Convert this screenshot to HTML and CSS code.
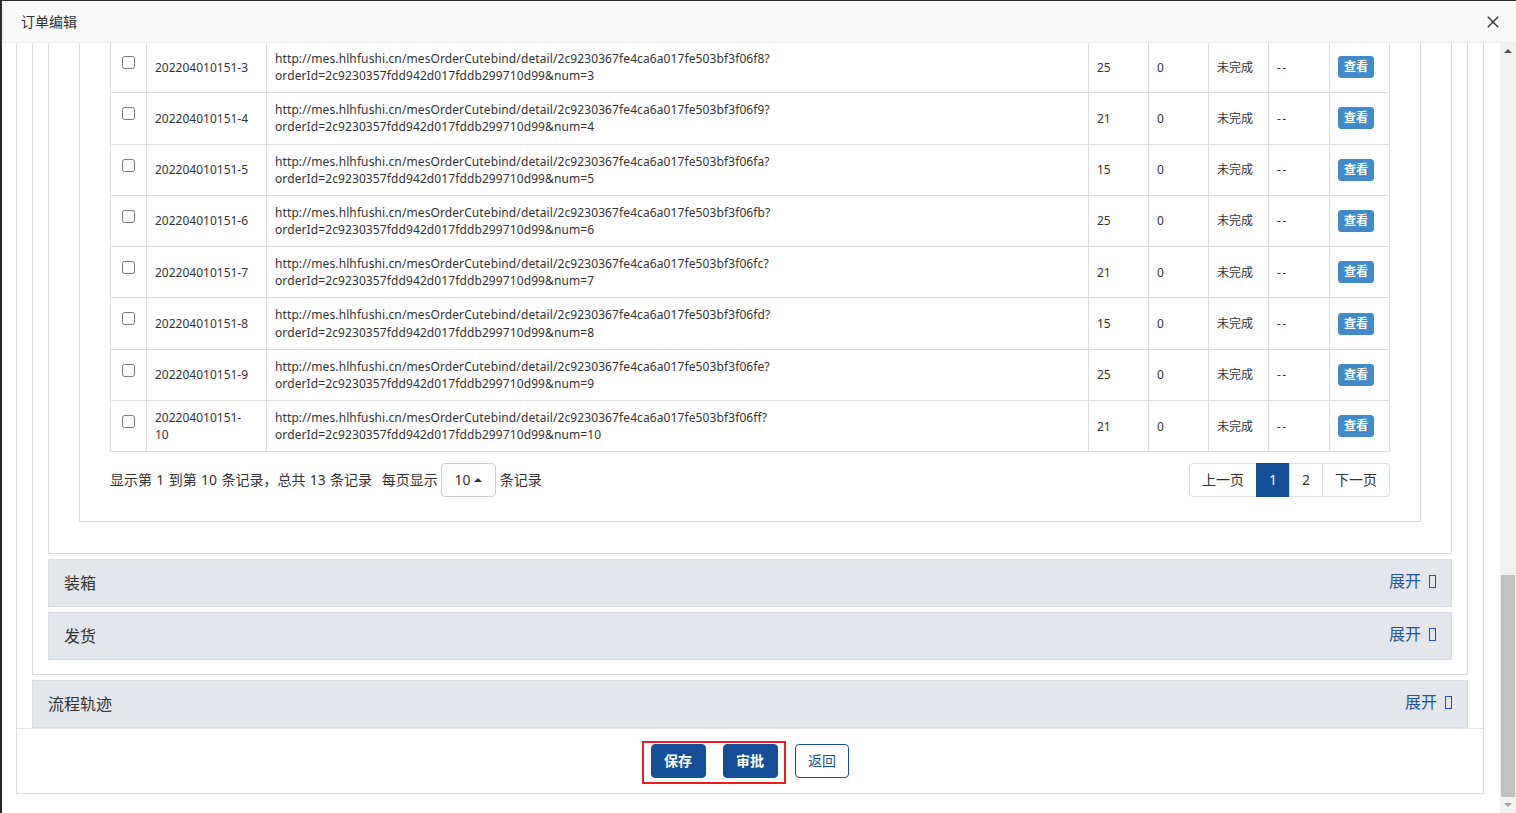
FILE: index.html
```html
<!DOCTYPE html>
<html lang="zh-CN">
<head>
    <meta charset="UTF-8">
    <meta name="viewport" content="width=device-width, initial-scale=1.0">
    <title>订单编辑</title>
    <link rel="stylesheet" href="styles.css">
</head>
<body>
<div class="layer">
    <div class="layer-title">
        <span class="layer-name">订单编辑</span>
        <svg class="layer-close" width="12" height="12" viewBox="0 0 12 12"><path d="M0.8 0.8L11.2 11.2M11.2 0.8L0.8 11.2" stroke="#333" stroke-width="1.4" fill="none"/></svg>
    </div>

    <div class="layer-body">
        <div class="layer-content">
            <div class="form-box">
                <div class="form-main">
                    <!-- 裁床/绑定 -->
                    <div class="section">
                        <div class="section-body">
                            <div class="table-box">
                                <table class="bind-table">
                                    <colgroup>
                                        <col style="width:36px"><col style="width:120px"><col style="width:822px">
                                        <col style="width:60px"><col style="width:60px"><col style="width:60px">
                                        <col style="width:61px"><col style="width:60px">
                                    </colgroup>
                                    <tr>
                                        <td class="check"><input type="checkbox"></td>
                                        <td>202204010151-3</td>
                                        <td class="url">http://mes.hlhfushi.cn/mesOrderCutebind/detail/2c9230367fe4ca6a017fe503bf3f06f8?<br>orderId=2c9230357fdd942d017fddb299710d99&amp;num=3</td>
                                        <td>25</td><td>0</td><td>未完成</td><td class="dash">--</td>
                                        <td><button class="btn-view">查看</button></td>
                                    </tr>
                                    <tr>
                                        <td class="check"><input type="checkbox"></td>
                                        <td>202204010151-4</td>
                                        <td class="url">http://mes.hlhfushi.cn/mesOrderCutebind/detail/2c9230367fe4ca6a017fe503bf3f06f9?<br>orderId=2c9230357fdd942d017fddb299710d99&amp;num=4</td>
                                        <td>21</td><td>0</td><td>未完成</td><td class="dash">--</td>
                                        <td><button class="btn-view">查看</button></td>
                                    </tr>
                                    <tr>
                                        <td class="check"><input type="checkbox"></td>
                                        <td>202204010151-5</td>
                                        <td class="url">http://mes.hlhfushi.cn/mesOrderCutebind/detail/2c9230367fe4ca6a017fe503bf3f06fa?<br>orderId=2c9230357fdd942d017fddb299710d99&amp;num=5</td>
                                        <td>15</td><td>0</td><td>未完成</td><td class="dash">--</td>
                                        <td><button class="btn-view">查看</button></td>
                                    </tr>
                                    <tr>
                                        <td class="check"><input type="checkbox"></td>
                                        <td>202204010151-6</td>
                                        <td class="url">http://mes.hlhfushi.cn/mesOrderCutebind/detail/2c9230367fe4ca6a017fe503bf3f06fb?<br>orderId=2c9230357fdd942d017fddb299710d99&amp;num=6</td>
                                        <td>25</td><td>0</td><td>未完成</td><td class="dash">--</td>
                                        <td><button class="btn-view">查看</button></td>
                                    </tr>
                                    <tr>
                                        <td class="check"><input type="checkbox"></td>
                                        <td>202204010151-7</td>
                                        <td class="url">http://mes.hlhfushi.cn/mesOrderCutebind/detail/2c9230367fe4ca6a017fe503bf3f06fc?<br>orderId=2c9230357fdd942d017fddb299710d99&amp;num=7</td>
                                        <td>21</td><td>0</td><td>未完成</td><td class="dash">--</td>
                                        <td><button class="btn-view">查看</button></td>
                                    </tr>
                                    <tr>
                                        <td class="check"><input type="checkbox"></td>
                                        <td>202204010151-8</td>
                                        <td class="url">http://mes.hlhfushi.cn/mesOrderCutebind/detail/2c9230367fe4ca6a017fe503bf3f06fd?<br>orderId=2c9230357fdd942d017fddb299710d99&amp;num=8</td>
                                        <td>15</td><td>0</td><td>未完成</td><td class="dash">--</td>
                                        <td><button class="btn-view">查看</button></td>
                                    </tr>
                                    <tr>
                                        <td class="check"><input type="checkbox"></td>
                                        <td>202204010151-9</td>
                                        <td class="url">http://mes.hlhfushi.cn/mesOrderCutebind/detail/2c9230367fe4ca6a017fe503bf3f06fe?<br>orderId=2c9230357fdd942d017fddb299710d99&amp;num=9</td>
                                        <td>25</td><td>0</td><td>未完成</td><td class="dash">--</td>
                                        <td><button class="btn-view">查看</button></td>
                                    </tr>
                                    <tr>
                                        <td class="check"><input type="checkbox"></td>
                                        <td>202204010151-<br>10</td>
                                        <td class="url">http://mes.hlhfushi.cn/mesOrderCutebind/detail/2c9230367fe4ca6a017fe503bf3f06ff?<br>orderId=2c9230357fdd942d017fddb299710d99&amp;num=10</td>
                                        <td>21</td><td>0</td><td>未完成</td><td class="dash">--</td>
                                        <td><button class="btn-view">查看</button></td>
                                    </tr>
                                </table>

                                <!-- 分页 -->
                                <div class="table-pagination">
                                    <div class="pagination-detail">
                                        <span class="pagination-info">显示第 1 到第 10 条记录，总共 13 条记录</span>
                                        <span>每页显示 <button class="page-size">10 <span class="caret"></span></button> 条记录</span>
                                    </div>
                                    <ul class="pagination">
                                        <li><a href="#">上一页</a></li>
                                        <li class="active"><a href="#">1</a></li>
                                        <li><a href="#">2</a></li>
                                        <li><a href="#">下一页</a></li>
                                    </ul>
                                </div>
                            </div>
                        </div>

                        <div class="panel-head">
                            <span>装箱</span>
                            <a class="toggle" href="#">展开<span class="icon-missing"></span></a>
                        </div>
                        <div class="panel-head">
                            <span>发货</span>
                            <a class="toggle" href="#">展开<span class="icon-missing"></span></a>
                        </div>
                    </div>

                    <div class="panel-head panel-flow">
                        <span>流程轨迹</span>
                        <a class="toggle" href="#">展开<span class="icon-missing"></span></a>
                    </div>
                </div>

                <!-- 底部按钮 -->
                <div class="form-footer">
                    <span class="mark">
                        <button class="btn btn-primary">保存</button>
                        <button class="btn btn-primary">审批</button>
                    </span>
                    <button class="btn btn-default">返回</button>
                </div>
            </div>
        </div>

        <div class="scrollbar">
            <div class="sb-arrow sb-up"></div>
            <div class="sb-track"><div class="sb-thumb"></div></div>
            <div class="sb-arrow sb-down"></div>
        </div>
    </div>
</div>
</body>
</html>
```

FILE: styles.css
```css
/* Umum */
body {
    margin: 0;
    background-color: #2b2b2b;
    font-family: "Noto Sans", "Noto Sans CJK SC", sans-serif;
    color: #333;
}

.layer {
    margin: 1px 0 0 2px;
    height: 812px;
    background-color: #fff;
    display: flex;
    flex-direction: column;
    overflow: hidden;
}

.layer-title {
    flex-shrink: 0;
    height: 41px;
    border-bottom: 1px solid #eee;
    background-color: #f8f8f8;
    padding: 0 17px 0 19px;
    font-size: 14px;
    display: flex;
    justify-content: space-between;
    align-items: center;
}
.layer-name { margin-top: -2px; }
.layer-close { margin-top: 1px; }

.layer-body {
    flex: 1;
    min-height: 0;
    display: flex;
}
.layer-content {
    flex: 1;
    overflow: hidden;
}

/* Kotak bertingkat */
.form-box {
    margin: -2px 16px 0 14px;
    border: 1px solid #ddd;
    border-top: 0;
}
.form-main { padding: 0 15px; }

.section {
    border: 1px solid #ddd;
    border-top: 0;
    padding: 0 15px 14px;
}
.section-body {
    border: 1px solid #ddd;
    border-top: 0;
    padding: 0 30px 31px;
    margin-bottom: 5px;
}
.table-box {
    border: 1px solid #ddd;
    border-top: 0;
    padding: 0 30px 24px;
}

/* Tabel */
.bind-table {
    width: 100%;
    table-layout: fixed;
    border-collapse: collapse;
    font-size: 12px;
    line-height: 1.42857;
}
.bind-table td {
    border: 1px solid #ddd;
    padding: 8px;
    vertical-align: middle;
    word-break: break-all;
}
.bind-table td.url { letter-spacing: 0.1px; }
.bind-table td.dash { letter-spacing: 1.5px; }
.bind-table td.check {
    vertical-align: top;
}
.bind-table td.check input {
    display: block;
    margin: 6px auto 0;
}
.btn-view {
    font-family: inherit;
    font-size: 12px;
    font-weight: bold;
    line-height: 1.5;
    padding: 1px 5px;
    color: #fff;
    background-color: #428bca;
    border: 1px solid #428bca;
    border-radius: 3px;
}

/* Paginasi */
.table-pagination {
    margin-top: 11px;
    display: flex;
    justify-content: space-between;
    align-items: center;
    font-size: 14px;
}
.pagination-info {
    margin-right: 6px;
    word-spacing: 0.7px;
}
.page-size {
    font-family: inherit;
    font-size: 14px;
    line-height: 20px;
    color: #333;
    padding: 6px 13px 6px 12px;
    background-color: #fff;
    border: 1px solid #ccc;
    border-radius: 4px;
}
.caret {
    display: inline-block;
    vertical-align: 3px;
    border-left: 4px solid transparent;
    border-right: 4px solid transparent;
    border-bottom: 4px solid #333;
}
.pagination {
    display: flex;
    list-style: none;
    margin: 0;
    padding: 0;
}
.pagination li a {
    display: block;
    padding: 6px 12px;
    line-height: 20px;
    margin-left: -1px;
    border: 1px solid #ddd;
    color: #333;
    text-decoration: none;
}
.pagination li:first-child a { margin-left: 0; border-radius: 4px 0 0 4px; }
.pagination li:last-child a { border-radius: 0 4px 4px 0; }
.pagination li.active a {
    background-color: #154f98;
    border-color: #154f98;
    color: #fff;
}

/* Panel lipat */
.panel-head {
    height: 46px;
    line-height: 46px;
    padding: 0 15px;
    background-color: #e3e6ea;
    border: 1px solid #dadde1;
    font-size: 16px;
    display: flex;
    justify-content: space-between;
}
.panel-head + .panel-head { margin-top: 5px; }
.panel-flow { margin-top: 5px; }
.toggle {
    color: #1d54a0;
    text-decoration: none;
    margin-top: -2px;
}
.icon-missing {
    display: inline-block;
    width: 5px;
    height: 11px;
    margin-left: 8px;
    border: 1.5px solid #1d54a0;
    vertical-align: -1px;
}

/* Tombol bawah */
.form-footer {
    height: 34px;
    padding: 15px 9px 15px 0;
    border-top: 1px solid #e5e5e5;
    display: flex;
    justify-content: center;
    align-items: flex-start;
}
.mark {
    display: flex;
    gap: 17px;
    margin-top: -3px;
    padding: 1px 6px 4px 7px;
    border: 2px solid #f01b1b;
}
.btn {
    font-family: inherit;
    font-size: 14px;
    line-height: 20px;
    padding: 6px 13px 6px 12px;
    border-radius: 4px;
    border: 1px solid #154f98;
}
.btn-primary {
    background-color: #154f98;
    color: #fff;
    font-weight: bold;
}
.btn-default {
    margin-left: 9px;
    padding-right: 12px;
    background-color: #fff;
    color: #154f98;
}

/* Scrollbar */
.scrollbar {
    width: 16px;
    background-color: #f1f1f1;
    display: flex;
    flex-direction: column;
}
.sb-arrow {
    height: 16px;
    display: flex;
    align-items: center;
    justify-content: center;
}
.sb-up::after {
    content: "";
    border-left: 4px solid transparent;
    border-right: 4px solid transparent;
    border-bottom: 4px solid #505050;
}
.sb-down::after {
    content: "";
    border-left: 4px solid transparent;
    border-right: 4px solid transparent;
    border-top: 4px solid #a3a3a3;
}
.sb-track {
    flex: 1;
    padding-top: 516px;
}
.sb-thumb {
    height: 222px;
    margin: 0 1px 0 1px;
    background-color: #c1c1c1;
}
```
